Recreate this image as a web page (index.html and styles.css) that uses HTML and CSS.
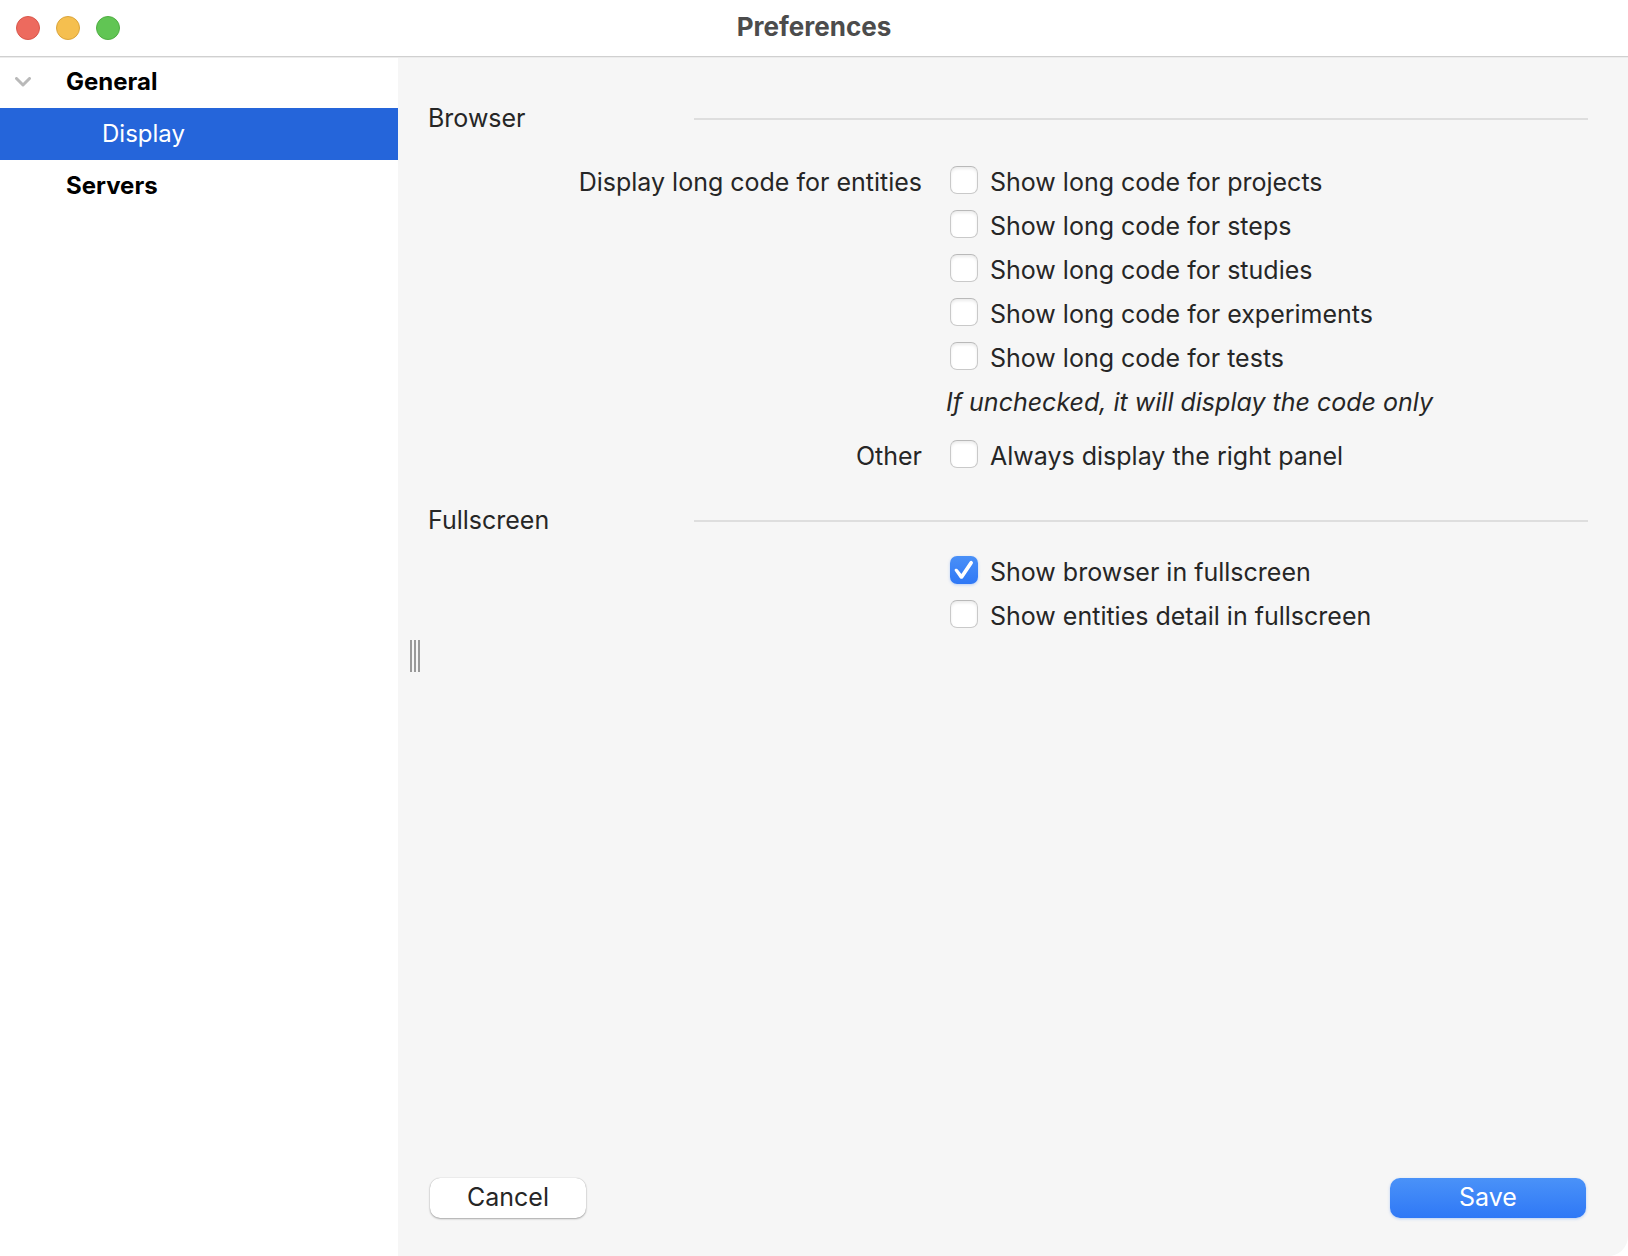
FILE: index.html
```
<!DOCTYPE html>
<html lang="en">
<head>
<meta charset="UTF-8">
<meta name="viewport" content="width=device-width, initial-scale=1.0">
<title>Preferences</title>

<link rel="stylesheet" href="styles.css">
</head>

<body>

<!-- TITLE BAR -->
<header class="titlebar">
  <div class="lights">
    <button class="light red" aria-label="Close"></button>
    <button class="light yellow" aria-label="Minimize"></button>
    <button class="light green" aria-label="Zoom"></button>
  </div>
  <h1>Preferences</h1>
</header>

<div class="window">

<!-- SIDEBAR -->
<nav class="sidebar">
  <a href="#general" class="group">
    <svg class="chevron" viewBox="0 0 16 10"><path d="M1.5 1.5 L8 8 L14.5 1.5"/></svg>
    General
  </a>
  <a href="#display" class="item active">Display</a>
  <a href="#servers" class="group">Servers</a>
</nav>

<!-- SPLITTER -->
<div class="splitter"><span class="grip"></span></div>

<!-- MAIN -->
<form class="main" id="display">

  <section>
    <h2>Browser</h2>
    <div class="row">
      <span class="label" id="codes">Display long code for entities</span>
      <div class="options" role="group" aria-labelledby="codes">
        <label><input type="checkbox" name="projects">Show long code for projects</label>
        <label><input type="checkbox" name="steps">Show long code for steps</label>
        <label><input type="checkbox" name="studies">Show long code for studies</label>
        <label><input type="checkbox" name="experiments">Show long code for experiments</label>
        <label><input type="checkbox" name="tests">Show long code for tests</label>
        <p class="note">If unchecked, it will display the code only</p>
      </div>
    </div>
    <div class="row">
      <span class="label" id="other">Other</span>
      <div class="options" role="group" aria-labelledby="other">
        <label><input type="checkbox" name="panel">Always display the right panel</label>
      </div>
    </div>
  </section>

  <section class="compact">
    <h2>Fullscreen</h2>
    <div class="row">
      <span class="label"></span>
      <div class="options">
        <label><input type="checkbox" name="browser" checked>Show browser in fullscreen</label>
        <label><input type="checkbox" name="details">Show entities detail in fullscreen</label>
      </div>
    </div>
  </section>

  <footer>
    <button type="button" class="btn cancel">Cancel</button>
    <button type="button" class="btn save">Save</button>
  </footer>

</form>

</div>

</body>
</html>
```
FILE: styles.css
```
/* RESET */
*{
  margin:0;
  padding:0;
  box-sizing:border-box;
  font-family:Inter, "Liberation Sans", sans-serif;
}

body{
  background:#fff;
  color:#262626;
  font-size:25px;
  line-height:44px;
  min-height:100vh;
  display:flex;
  flex-direction:column;
}

/* TITLE BAR */
.titlebar{
  height:56px;
  padding:0 16px;
  display:grid;
  grid-template-columns:1fr auto 1fr;
  align-items:center;
  z-index:1;
  box-shadow:0 1px #d0d0d0, 0 2px #ececec;
}

.titlebar h1{
  font-size:26px;
  font-weight:700;
  color:#4c4c4c;
  padding-bottom:2px;
}

.lights{
  display:flex;
  gap:16px;
}

.light{
  width:24px;
  height:24px;
  border-radius:50%;
  border:1px solid;
}

.red{
  background:#ed6a5e;
  border-color:#d9574b;
}

.yellow{
  background:#f5bf4f;
  border-color:#dba53b;
}

.green{
  background:#61c554;
  border-color:#4fae42;
}

.window{
  flex:1;
  display:flex;
}

/* SIDEBAR */
.sidebar{
  width:398px;
  flex-shrink:0;
}

.sidebar a{
  display:flex;
  align-items:center;
  height:52px;
  color:#000;
  font-size:24px;
  text-decoration:none;
}

.sidebar .group{
  font-weight:700;
  padding-left:66px;
}

.sidebar .item{
  padding-left:102px;
}

.sidebar .active{
  background:#2565da;
  color:#fff;
}

.chevron{
  width:16px;
  height:10px;
  margin-left:-51px;
  margin-right:35px;
  fill:none;
  stroke:#b9b9b9;
  stroke-width:3;
  stroke-linecap:round;
  stroke-linejoin:round;
}

/* SPLITTER */
.splitter{
  width:30px;
  padding-left:12px;
  background:#f6f6f6;
  display:flex;
  align-items:center;
  cursor:col-resize;
}

.grip{
  width:10px;
  height:32px;
  background:repeating-linear-gradient(90deg, #999 0 2px, transparent 2px 4px);
}

/* MAIN */
.main{
  flex:1;
  display:flex;
  flex-direction:column;
  padding:40px 40px 38px 0;
  background:#f6f6f6;
  border-radius:0 0 20px 0;
}

h2{
  display:grid;
  grid-template-columns:266px 1fr;
  align-items:center;
  font-size:25px;
  font-weight:400;
  margin-bottom:20px;
}

h2::after{
  content:"";
  height:2px;
  margin-top:2px;
  background:#dedede;
}

.row{
  display:grid;
  grid-template-columns:494px 1fr;
  gap:24px;
  margin-bottom:10px;
}

.label{
  text-align:right;
}

.options label{
  display:flex;
  align-items:center;
  gap:12px;
  padding-left:4px;
}

.note{
  font-style:italic;
}

.compact{
  margin-top:10px;
}

.compact h2{
  margin-bottom:8px;
}

/* CHECKBOX */
input{
  appearance:none;
  width:28px;
  height:28px;
  margin-bottom:4px;
  border:1px solid #c9c9c9;
  border-top-color:#b9b9b9;
  border-radius:7px;
  background:#fff;
  box-shadow:inset 0 2px 3px rgba(0,0,0,0.08);
}

input:checked{
  border:none;
  background:linear-gradient(#4a90f7, #2f78f6);
  box-shadow:0 1px 3px rgba(47,120,246,0.3);
  display:grid;
  place-items:center;
}

input:checked::before{
  content:"";
  width:20px;
  height:20px;
  background:#fff;
  clip-path:path("M1.3 11.6 Q-.2 9.6 1.6 8.8 Q2.9 8.2 4 9.7 L7.4 13.9 L15.6 1.8 Q16.8 .3 18.2 1.2 Q19.6 2.2 18.7 3.7 L9.1 17.9 Q7.5 19.6 5.8 17.9 Z");
}

/* BUTTONS */
footer{
  display:flex;
  justify-content:space-between;
  margin-top:auto;
  padding:0 2px;
}

.btn{
  height:40px;
  padding-bottom:2px;
  border:none;
  border-radius:10px;
  font-size:25px;
  cursor:pointer;
}

.cancel{
  width:156px;
  background:#fff;
  color:#262626;
  box-shadow:0 0 1px rgba(0,0,0,0.3), 0 1px 2px rgba(0,0,0,0.3);
}

.save{
  width:196px;
  background:linear-gradient(#4a92f8, #2f78f6);
  color:#fff;
  box-shadow:0 1px 3px rgba(47,120,246,0.3);
}
```
